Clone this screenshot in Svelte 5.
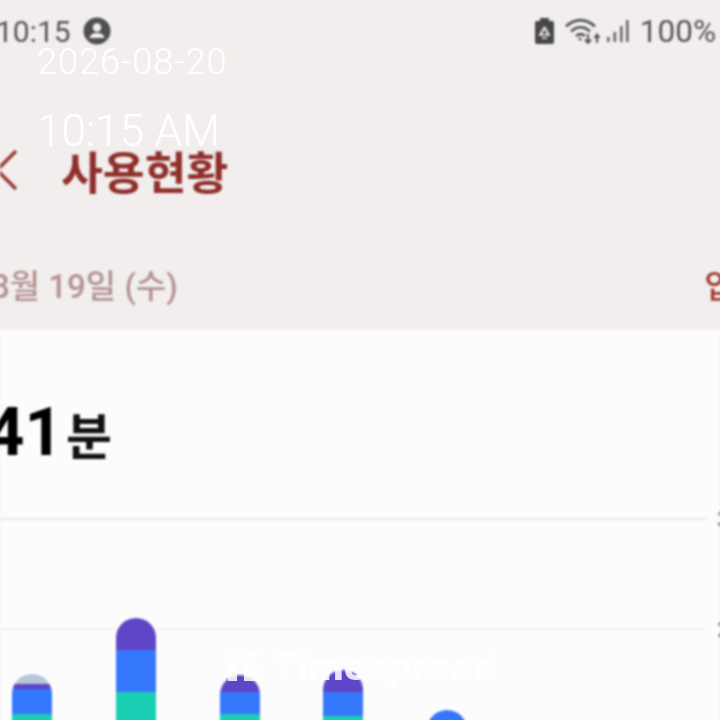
<script>
	// the bars run past the bottom of the window, so the teal part is cut off there
	const bars = [
		{ id: 'a', segments: [{ c: '#b7c5d9', h: 10 }, { c: '#5f45c8', h: 5 }, { c: '#3678fb', h: 25 }, { c: '#1bcfb4', h: 46 }] },
		{ id: 'b', segments: [{ c: '#5f45c8', h: 32 }, { c: '#3678fb', h: 42 }, { c: '#1bcfb4', h: 68 }] },
		{ id: 'c', segments: [{ c: '#5f45c8', h: 17 }, { c: '#3678fb', h: 22 }, { c: '#1bcfb4', h: 46 }] },
		{ id: 'd', segments: [{ c: '#5f45c8', h: 22 }, { c: '#3678fb', h: 24 }, { c: '#1bcfb4', h: 44 }] },
		{ id: 'e', segments: [{ c: '#3678fb', h: 50 }] }
	];
</script>

<div class="screen">
	<div class="blurred">
		<div class="status-bar">
			<span class="clock">10:15</span>
			<svg class="avatar" viewBox="0 0 28 28" width="28" height="28">
				<circle cx="14" cy="14" r="13.500" fill="#4f4f4f" />
				<circle cx="14" cy="10.500" r="4.200" fill="#f2eeee" />
				<path d="M6.500 21c1-3.800 4-5 7.500-5s6.500 1.200 7.500 5z" fill="#f2eeee" />
			</svg>
			<span class="spacer"></span>
			<svg class="battery" viewBox="0 0 19 26" width="19" height="26">
				<path d="M5 0h9v3h3a2 2 0 0 1 2 2v19a2 2 0 0 1-2 2H2a2 2 0 0 1-2-2V5a2 2 0 0 1 2-2h3z" fill="#474747" />
				<path d="M9.500 9l2.500 3.500H7zM4.500 17l2-3 2 3zM14.500 17l-2-3-2 3zM7 20h5" fill="none" stroke="#f2eeee" stroke-width="1.300" />
			</svg>
			<svg class="wifi" viewBox="0 0 36 26" width="36" height="26" fill="none" stroke="#555" stroke-width="2.600">
				<path d="M1 8.500C10 0 21 0 30 8.500" />
				<path d="M6 13.500c6-5.500 13-5.500 19 0" />
				<path d="M11 18c3.500-2.800 6-2.800 9 0" />
				<circle cx="15" cy="21" r="1.600" fill="#555" stroke="none" />
				<path d="M23 16v9M20 21.500l3 3.500 3-3.500" stroke-width="2" />
				<path d="M32 25v-8M29.500 20l2.500-3.500 2.500 3.500" stroke-width="2" />
			</svg>
			<svg class="signal" viewBox="0 0 22 24" width="22" height="24" fill="#666">
				<rect x="0" y="18" width="2.600" height="5" />
				<rect x="6.500" y="13" width="2.600" height="10" />
				<rect x="13" y="7" width="2.600" height="16" />
				<rect x="19" y="1" width="2.600" height="22" />
			</svg>
			<span class="battery-level">100%</span>
		</div>

		<header class="title-row">
			<svg class="back" viewBox="0 0 20 44" width="20" height="44" fill="none" stroke="#9a3a35" stroke-width="3.500">
				<path d="M16 3 -3 22 16 41" />
			</svg>
			<h1>사용현황</h1>
		</header>

		<div class="date-row">
			<span class="date">8월 19일 (수)</span>
			<span class="pick">입력</span>
		</div>

		<section class="card">
			<div class="total"><strong>41</strong><span>분</span></div>
			<div class="chart">
				<div class="grid-line first"><i></i><em>3</em></div>
				<div class="grid-line second"><i></i><em>2</em></div>
				<div class="bars">
					{#each bars as bar (bar.id)}
						<div class="bar">
							{#each bar.segments as seg}
								<div style="height: {seg.h}px; background: {seg.c}"></div>
							{/each}
						</div>
					{/each}
				</div>
			</div>
		</section>
	</div>

	<div class="stamp stamp-date">2026-08-20</div>
	<div class="stamp stamp-time">10:15 AM</div>
	<div class="watermark">
		<svg viewBox="0 0 30 30" width="30" height="30" fill="#fff">
			<rect x="0" y="0" width="9" height="7" />
			<rect x="0" y="11" width="9" height="19" />
			<rect x="16" y="0" width="14" height="7" />
			<rect x="16" y="11" width="14" height="19" />
		</svg>
		<span>Timespread</span>
	</div>
</div>

<style>
	:global(body) {
		margin: 0;
	}

	.screen {
		position: relative;
		width: 720px;
		height: 720px;
		overflow: hidden;
		background: #f2eeee;
		font-family: Roboto, "Noto Sans CJK KR", sans-serif;
	}

	.blurred {
		display: flex;
		flex-direction: column;
		height: 760px;
		filter: blur(0.9px);
	}

	.status-bar {
		display: flex;
		align-items: center;
		height: 62px;
		flex: none;
		color: #555;
		font-size: 30px;
	}

	.clock {
		margin-left: -4px;
	}

	.avatar {
		margin-left: 12px;
	}

	.spacer {
		flex: 1;
	}

	.battery {
		margin-right: 11px;
	}

	.wifi {
		margin-right: 6px;
	}

	.signal {
		margin-right: 11px;
	}

	.battery-level {
		margin-right: 4px;
		font-size: 31.500px;
	}

	.title-row {
		display: flex;
		align-items: center;
		height: 90px;
		flex: none;
		margin-top: 63px;
	}

	.back {
		flex: none;
	}

	h1 {
		margin: 0 0 0 41px;
		font-size: 45.500px;
		font-weight: 700;
		color: #8f2f2b;
	}

	.date-row {
		display: flex;
		justify-content: space-between;
		align-items: center;
		height: 115px;
		flex: none;
		box-sizing: border-box;
		padding-top: 34px;
		padding-bottom: 11px;
		font-size: 33px;
		font-weight: 500;
	}

	.date {
		margin-left: -9px;
		color: #b39191;
	}

	.pick {
		margin-right: -45px;
		color: #a33a33;
	}

	.card {
		flex: 1;
		display: flex;
		flex-direction: column;
		background: #fcfcfc;
	}

	.total {
		display: flex;
		align-items: baseline;
		height: 188px;
		flex: none;
		box-sizing: border-box;
		padding-top: 62px;
		margin-left: -14px;
		color: #000;
	}

	.total strong {
		font-size: 67px;
		font-weight: 700;
		line-height: 80px;
	}

	.total span {
		margin-left: 3px;
		font-size: 50px;
		font-weight: 700;
		color: #111;
	}

	.chart {
		position: relative;
		flex: 1;
		min-height: 0;
	}

	.grid-line {
		position: absolute;
		left: 0;
		right: 0;
		display: flex;
		align-items: center;
		height: 2px;
	}

	.grid-line.first {
		top: 0;
	}

	.grid-line.second {
		top: 110px;
	}

	.grid-line i {
		flex: none;
		width: 706px;
		height: 2px;
		background: #e9e9e9;
	}

	.grid-line.second i {
		background: #f2f2f2;
	}

	.grid-line em {
		margin-left: 11px;
		font-size: 22px;
		font-style: normal;
		color: #777;
	}

	.bars {
		position: absolute;
		inset: 0;
		display: flex;
		align-items: flex-end;
		gap: 63.750px;
		padding-left: 12px;
	}

	.bar {
		flex: none;
		width: 40px;
		display: flex;
		flex-direction: column;
		border-radius: 20px 20px 0 0;
		overflow: hidden;
	}

	.stamp {
		position: absolute;
		left: 37px;
		color: #fff;
		font-weight: 300;
		line-height: 1;
	}

	.stamp-date {
		top: 44px;
		font-size: 36px;
		letter-spacing: 1px;
	}

	.stamp-time {
		top: 109px;
		font-size: 44px;
	}

	.watermark {
		position: absolute;
		left: 228px;
		top: 651px;
		display: flex;
		align-items: center;
		gap: 14px;
		color: #fff;
		font-family: Inter, Roboto, sans-serif;
		font-size: 38px;
		font-weight: 800;
		line-height: 30px;
		opacity: 0.85;
		filter: blur(0.6px);
	}
</style>
